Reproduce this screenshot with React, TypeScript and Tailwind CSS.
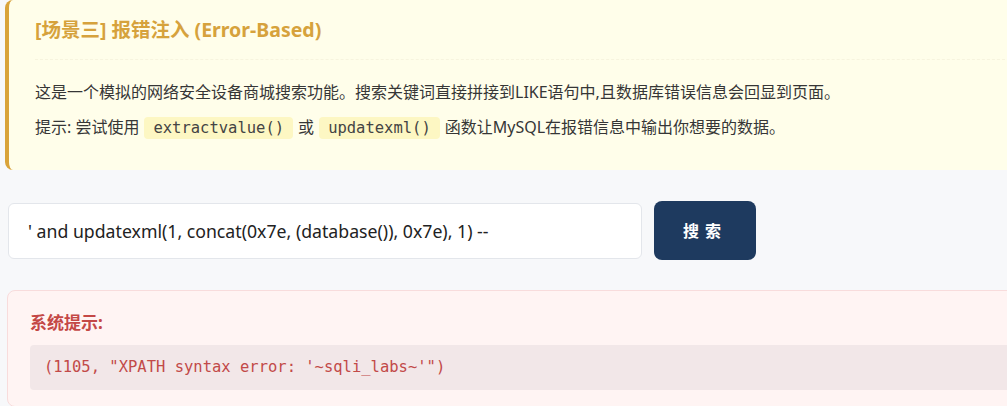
import React from "react"

const sans = "font-['Noto_Sans','Noto_Sans_CJK_SC',sans-serif]"
const mono = "font-['DejaVu_Sans_Mono','Noto_Sans_CJK_SC',monospace]"

function Chip({ children }: { children: React.ReactNode }) {
  return (
    <code className={`${mono} bg-[#fdf7c3] text-[#444] text-[15.5px] px-[9px] py-[2px] rounded mx-[5px]`}>
      {children}
    </code>
  )
}

export default function App() {
  return (
    <div className={`${sans} w-full h-[406px] overflow-hidden bg-[#f7f8fa]`}>
      <div className="w-[1040px] pl-[5px]">
        {/* scenario card */}
        <div className="bg-[#fffeea] border-l-4 border-[#d9a33a] rounded-lg pl-[26px] pt-[16px] pb-[29px]">
          <div className="text-[19.5px] leading-7 font-bold text-[#d6a23c] pb-[15px] border-b border-dashed border-[#f7f4de]">
            [场景三] 报错注入 (Error-Based)
          </div>
          <p className="mt-[19px] text-[16px] leading-[26px] text-[#363636]">
            这是一个模拟的网络安全设备商城搜索功能。搜索关键词直接拼接到LIKE语句中,且数据库错误信息会回显到页面。
          </p>
          <p className="mt-[9px] text-[16px] leading-[26px] text-[#363636]">
            提示: 尝试使用<Chip>extractvalue()</Chip>或<Chip>updatexml()</Chip>函数让MySQL在报错信息中输出你想要的数据。
          </p>
        </div>

        {/* search row */}
        <div className="flex items-center gap-3 mt-[31px] pl-[3px]">
          <input
            readOnly
            value="' and updatexml(1, concat(0x7e, (database()), 0x7e), 1) --"
            className={`${sans} w-[634px] h-[56px] bg-white border border-[#e3e6eb] rounded-md pl-[19px] text-[17.7px] text-[#222] outline-none`}
          />
          <button className="w-[102px] h-[59px] bg-[#1e3a5f] rounded-lg text-white text-[16px] font-bold tracking-[6px]">
            搜索
          </button>
        </div>

        {/* error panel */}
        <div className="mt-[30px] ml-[2px] bg-[#fff4f3] border border-[#f8dcdc] rounded-lg pl-[22px] pt-[20px] pb-[16px]">
          <div className="text-[17px] leading-6 font-bold text-[#c44846]">系统提示:</div>
          <div className="mt-[10px] h-[45px] flex items-center bg-[#f2e7e8] rounded pl-[14px]">
            <span className={`${mono} text-[15.5px] text-[#c24a48]`}>
              (1105, "XPATH syntax error: '~sqli_labs~'")
            </span>
          </div>
        </div>
      </div>
    </div>
  )
}
